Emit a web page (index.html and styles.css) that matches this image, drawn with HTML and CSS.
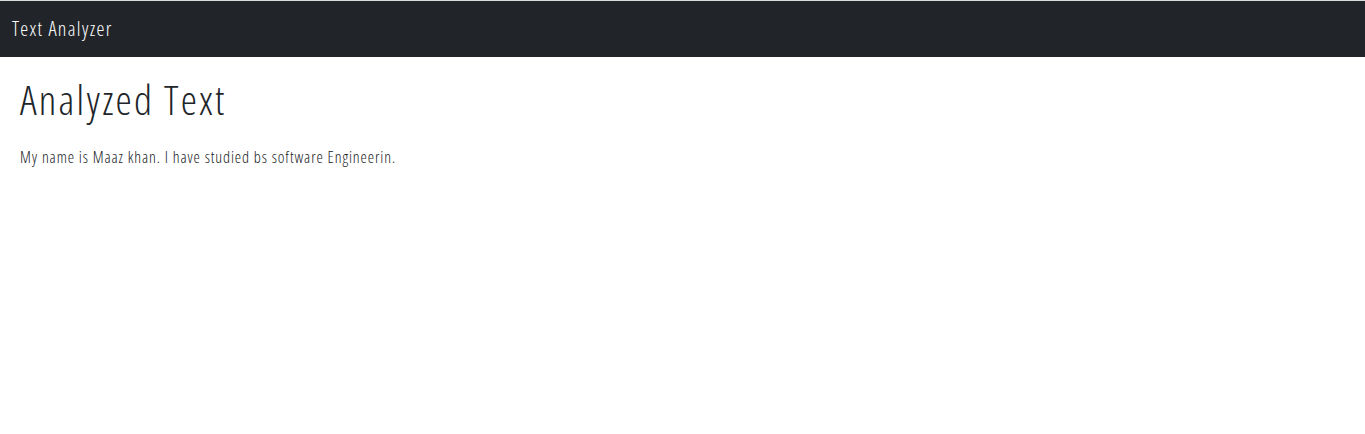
FILE: index.html
```html
<!DOCTYPE html>
<html lang="en">
<head>
<meta charset="utf-8">
<title>Text Analyzer</title>
<link rel="stylesheet" href="styles.css">
</head>
<body>
<nav class="navbar">
  <a class="brand" href="#">Text Analyzer</a>
</nav>
<main class="content">
  <h1 class="title">Analyzed Text</h1>
  <p class="text">My name is Maaz khan. I have studied bs software Engineerin.</p>
</main>
</body>
</html>
```
FILE: styles.css
```css
html, body {
  margin: 0;
  padding: 0;
  background: #fff;
}
body {
  font-family: "Open Sans", sans-serif;
  font-stretch: 75%;
  font-weight: 300;
  color: #212529;
  border-top: 1px solid #dcdcdc;
}
.navbar {
  background: #212529;
  display: flex;
  align-items: center;
  height: 56px;
  padding: 0 12px;
}
.brand {
  color: #fff;
  text-decoration: none;
  font-size: 20px;
  line-height: 30px;
  font-weight: 300;
  letter-spacing: 1.3px;
}
.content {
  padding: 18px 20px;
}
.title {
  margin: 0 0 8px;
  font-size: 41px;
  font-weight: 300;
  line-height: 1.2;
  letter-spacing: 2.2px;
}
.text {
  margin: 21px 0 0;
  font-size: 16px;
  line-height: 1.5;
  font-weight: 300;
  letter-spacing: 0.9px;
  color: #16191c;
}
```
